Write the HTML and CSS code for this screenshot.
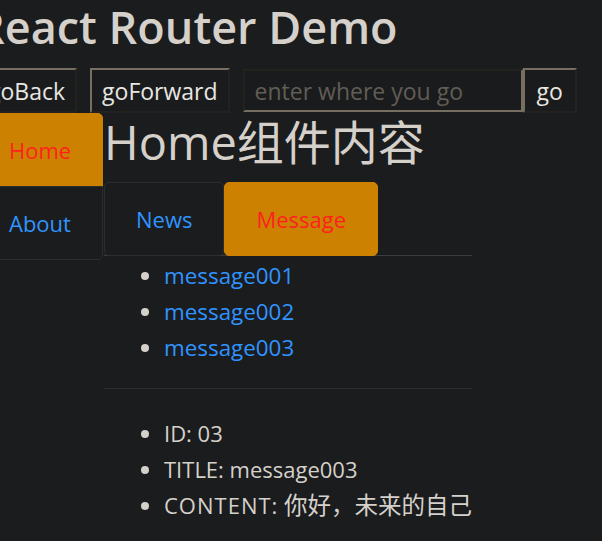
FILE: index.html
```html
<!DOCTYPE html>
<html>
<head>
<meta charset="utf-8">
<link rel="stylesheet" href="styles.css">
</head>
<body>
<div class="page">
  <h2 class="title">React Router Demo</h2>
  <div class="toolbar">
    <button class="btn btn-back">goBack</button>
    <button class="btn btn-fwd">goForward</button>
    <input class="where" type="text" placeholder="enter where you go">
    <button class="btn btn-go">go</button>
  </div>
  <div class="main">
    <div class="side">
      <a class="side-item active">Home</a>
      <a class="side-item">About</a>
    </div>
    <div class="content">
      <h2 class="home-title">Home组件内容</h2>
      <ul class="tabs">
        <li><a class="tab">News</a></li>
        <li><a class="tab active">Message</a></li>
      </ul>
      <ul class="list msgs">
        <li><a class="link">message001</a></li>
        <li><a class="link">message002</a></li>
        <li><a class="link">message003</a></li>
      </ul>
      <hr class="sep">
      <ul class="list detail">
        <li>ID: 03</li>
        <li>TITLE: message003</li>
        <li><span class="wide">CONTENT:</span> <span class="cjk">你好，未来的自己</span></li>
      </ul>
    </div>
  </div>
</div>
</body>
</html>
```

FILE: styles.css
```css
html, body {
  margin: 0;
  padding: 0;
  background: #1b1c1e;
  overflow: hidden;
}
body {
  color: #d5d1ca;
  font-family: "Open Sans", "Noto Sans CJK SC", sans-serif;
  font-size: 22px;
}
.page {
  margin-left: -24px;
  width: 640px;
}
.title {
  margin: 0;
  font-size: 45px;
  font-weight: 600;
  line-height: 54px;
  height: 68px;
  white-space: nowrap;
}
.toolbar {
  display: flex;
  align-items: flex-start;
  height: 45px;
}
.btn {
  font-family: inherit;
  font-size: 23px;
  line-height: 30px;
  color: #e8e6e3;
  background: #1a1b1c;
  border: 2px solid;
  border-color: #776f62 #23221f #23221f #776f62;
  padding: 6px 10px 5px;
  margin: 0;
}
.btn-back { margin-right: 13px; }
.btn-fwd { margin-right: 13px; }
.btn-go { padding: 6px 12px 5px 12px; }
.where {
  font-family: inherit;
  font-size: 23px;
  line-height: 30px;
  width: 280px;
  height: 43px;
  box-sizing: border-box;
  margin-top: 1px;
  padding: 4px 10px;
  color: #d5d1ca;
  background: #1a1b1c;
  border: 2px solid;
  border-color: #23221f #776f62 #776f62 #23221f;
  outline: none;
}
.where::placeholder { color: #615d57; }
.main {
  display: flex;
  align-items: flex-start;
}
.side {
  width: 127px;
  display: flex;
  flex-direction: column;
  margin-right: 1px;
}
.side-item {
  display: block;
  padding: 21px 32px;
  line-height: 30px;
  border: 1px solid #2b2e30;
  margin-bottom: -1px;
  color: #3094ff;
  background: #1b1c1e;
}
.side-item:first-child { border-radius: 5px 5px 0 0; }
.side-item:last-child { border-radius: 0 0 5px 5px; }
.side-item.active {
  background: #cc8200;
  border-color: #cc8200;
  color: #ff1f1f;
}
.content {
  width: 368px;
}
.home-title {
  margin: 0 0 10px;
  font-size: 47px;
  font-weight: 400;
  line-height: 59px;
  white-space: nowrap;
}
.tabs {
  list-style: none;
  margin: 0;
  padding: 0;
  display: flex;
  border-bottom: 1px solid #3a3c3e;
}
.tab {
  display: block;
  padding: 21px 31px;
  line-height: 30px;
  border: 1px solid #2b2e30;
  border-radius: 5px;
  color: #3094ff;
  margin-bottom: -1px;
}
.tab.active {
  background: #cc8200;
  border-color: #cc8200;
  color: #ff1f1f;
}
.list {
  margin: 0;
  padding-left: 60px;
  line-height: 36px;
  white-space: nowrap;
}
.msgs { margin-top: 2px; font-size: 22.4px; }
.link { color: #3094ff; }
.wide { letter-spacing: 1px; }
.cjk { font-size: 23.5px; }
.sep {
  margin: 22px 0 26px;
  border: 0;
  border-top: 1px solid #2c2e30;
  height: 0;
}
```
